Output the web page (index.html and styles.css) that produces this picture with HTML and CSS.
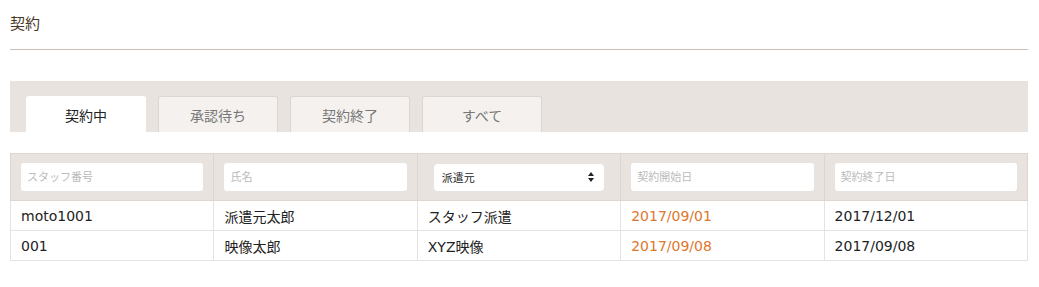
FILE: index.html
```html
<!DOCTYPE html>
<html lang="ja">
<head>
    <meta charset="UTF-8">
    <meta name="viewport" content="width=device-width, initial-scale=1.0">
    <title>契約</title>
    <link rel="stylesheet" href="styles.css">
</head>
<body>

    <div class="page">
        <h2 class="page-title">契約</h2>

        <div class="tab-bar">
            <a class="tab active" href="#">契約中</a>
            <a class="tab" href="#">承認待ち</a>
            <a class="tab" href="#">契約終了</a>
            <a class="tab" href="#">すべて</a>
        </div>

        <table class="contract-table">
            <thead>
                <tr>
                    <th><input type="text" placeholder="スタッフ番号"></th>
                    <th><input type="text" placeholder="氏名"></th>
                    <th>
                        <div class="select-box">
                            <span>派遣元</span>
                            <svg class="arrows" width="6" height="10" viewBox="0 0 6 10">
                                <path d="M3 0 L6 4 L0 4 Z M0 6 L6 6 L3 10 Z" fill="#222"/>
                            </svg>
                        </div>
                    </th>
                    <th><input type="text" placeholder="契約開始日"></th>
                    <th><input type="text" placeholder="契約終了日"></th>
                </tr>
            </thead>
            <tbody>
                <tr>
                    <td>moto1001</td>
                    <td>派遣元太郎</td>
                    <td>スタッフ派遣</td>
                    <td class="start">2017/09/01</td>
                    <td>2017/12/01</td>
                </tr>
                <tr>
                    <td>001</td>
                    <td>映像太郎</td>
                    <td>XYZ映像</td>
                    <td class="start">2017/09/08</td>
                    <td>2017/09/08</td>
                </tr>
            </tbody>
        </table>
    </div>

</body>
</html>
```

FILE: styles.css
```css
body {
    font-family: "DejaVu Sans", "Noto Sans CJK JP", sans-serif;
    background-color: #fff;
    color: #333;
    margin: 0;
    padding: 0;
}

.page {
    padding: 12px 11px 0 10px;
}

.page-title {
    margin: 0;
    font-size: 15px;
    font-weight: normal;
    line-height: 24px;
    color: #4a3826;
    padding-bottom: 13px;
    border-bottom: 1px solid #c9c1b8;
}

.tab-bar {
    display: flex;
    gap: 12px;
    margin-top: 31px;
    padding: 15px 16px 0 16px;
    background-color: #e9e3df;
}

.tab {
    width: 120px;
    height: 36px;
    box-sizing: border-box;
    display: flex;
    align-items: center;
    justify-content: center;
    font-size: 14px;
    color: #777;
    text-decoration: none;
    background-color: #f4f1ee;
    border: 1px solid #ddd6d0;
    border-bottom: none;
    border-radius: 3px 3px 0 0;
}

.tab.active {
    background-color: #fff;
    color: #222;
    border-color: #fff;
}

.contract-table {
    width: 100%;
    margin-top: 21px;
    border-collapse: collapse;
    table-layout: fixed;
    font-size: 14px;
}

.contract-table th {
    background-color: #e9e3df;
    padding: 9px 10px 9px 10px;
    border: 1px solid #ddd5cf;
    font-weight: normal;
}

.contract-table td {
    height: 29px;
    padding: 0 10px;
    border: 1px solid #e6e2df;
    color: #222;
}

.contract-table td.start {
    color: #e0762c;
}

.contract-table input {
    width: 100%;
    height: 28px;
    box-sizing: border-box;
    border: none;
    border-radius: 3px;
    padding: 0 6px;
    font-family: inherit;
    font-size: 11px;
    background-color: #fff;
}

.contract-table input::placeholder {
    color: #bbb;
}

.select-box {
    margin: 0 6px;
    height: 27px;
    display: flex;
    align-items: center;
    justify-content: space-between;
    padding: 0 10px 0 8px;
    background-color: #fff;
    border-radius: 4px;
    font-size: 11px;
    color: #222;
}
```
